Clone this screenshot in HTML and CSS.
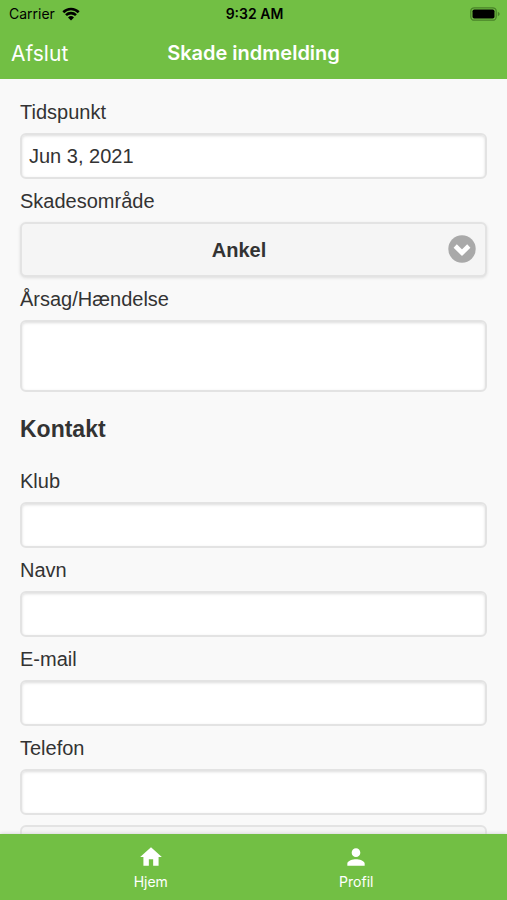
FILE: index.html
```html
<!DOCTYPE html>
<html lang="da">
<head>
<meta charset="utf-8">
<meta name="viewport" content="width=device-width, initial-scale=1">
<title>Skade indmelding</title>
<link rel="stylesheet" href="styles.css">
</head>
<body>
<header class="top">
  <div class="status">
    <div class="carrier">
      <span>Carrier</span>
      <svg class="wifi" viewBox="0 0 18 14" aria-hidden="true">
        <path d="M1.3 5.2a11 11 0 0 1 15.4 0M4 8.2a7.1 7.1 0 0 1 10 0" fill="none" stroke="#000" stroke-width="2.6"/>
        <path d="M9 13.6 6 10.5a4.3 4.3 0 0 1 6 0z"/>
      </svg>
    </div>
    <span class="clock">9:32 AM</span>
    <svg class="battery" viewBox="0 0 30 14" aria-hidden="true">
      <rect x=".8" y=".8" width="25.4" height="12.4" rx="3.5" fill="none" stroke="#498329" stroke-width="1.3"/>
      <rect x="2.5" y="2.5" width="22" height="9" rx="1.8"/>
      <path d="M27.8 4.8c2.4.8 2.4 3.6 0 4.400z" fill="#498329"/>
    </svg>
  </div>
  <div class="navbar">
    <button class="back" type="button">Afslut</button>
    <h1 class="title">Skade indmelding</h1>
  </div>
</header>
<main class="content">
  <form class="form">
    <label class="label" for="time">Tidspunkt</label>
    <input class="field" id="time" type="text" value="Jun 3, 2021">
    <label class="label" for="area">Skadesområde</label>
    <div class="picker">
      <select class="select" id="area"><option>Ankel</option></select>
      <svg class="chevron" viewBox="0 0 28 28" aria-hidden="true">
        <circle cx="14" cy="14" r="13.7" fill="#a9a9a9"/>
        <path d="m7.200 11 6.800 6.700 6.800-6.700" fill="none" stroke="#fff" stroke-width="4.600"/>
      </svg>
    </div>
    <label class="label" for="cause">Årsag/Hændelse</label>
    <textarea class="field area" id="cause"></textarea>
    <h2 class="heading">Kontakt</h2>
    <label class="label" for="club">Klub</label>
    <input class="field" id="club" type="text">
    <label class="label" for="name">Navn</label>
    <input class="field" id="name" type="text">
    <label class="label" for="email">E-mail</label>
    <input class="field" id="email" type="email">
    <label class="label" for="phone">Telefon</label>
    <input class="field" id="phone" type="tel">
    <button class="submit" type="button" aria-label="Send"></button>
  </form>
</main>
<nav class="tabs">
  <a class="tab" href="#hjem">
    <svg class="icon" viewBox="0 0 24 24" aria-hidden="true"><path d="M10 20v-6h4v6h5v-8h3L12 3 2 12h3v8z"/></svg>
    <span>Hjem</span>
  </a>
  <a class="tab" href="#profil">
    <svg class="icon" viewBox="0 0 24 24" aria-hidden="true"><path d="M12 12c2.200 0 4-1.800 4-4s-1.800-4-4-4-4 1.800-4 4 1.800 4 4 4zm0 2c-2.700 0-8 1.300-8 4v2h16v-2c0-2.700-5.300-4-8-4z"/></svg>
    <span>Profil</span>
  </a>
</nav>
</body>
</html>
```
FILE: styles.css
```css
* {
  box-sizing: border-box;
}

body {
  margin: 0;
  height: 100vh;
  display: flex;
  flex-direction: column;
  background: #f9f9f9;
  color: #333;
  font-family: "Liberation Sans", Arial, sans-serif;
}

.top {
  flex: none;
  background: #72bf44;
  font-family: Inter, sans-serif;
}

.status,
.navbar {
  display: grid;
  grid-template-columns: 1fr auto 1fr;
  align-items: center;
}

.status {
  height: 27px;
  padding: 0 7px 0 9px;
  color: #000;
  font-size: 14px;
}

.carrier {
  display: flex;
  align-items: center;
  gap: 7px;
}

.wifi {
  width: 18px;
  height: 14px;
}

.clock {
  font-weight: 600;
}

.battery {
  width: 30px;
  height: 14px;
  justify-self: end;
}

.navbar {
  height: 52px;
  padding: 0 11px;
  color: #fff;
}

.back {
  justify-self: start;
  padding: 0;
  border: 0;
  background: none;
  color: inherit;
  font: 21px Inter, sans-serif;
}

.title {
  margin: 0;
  font-size: 20px;
  font-weight: 600;
}

.content {
  flex: 1;
  min-height: 0;
  overflow-y: auto;
  scrollbar-width: none;
  padding: 21px 20px;
}

.form {
  display: flex;
  flex-direction: column;
}

.label {
  margin-bottom: 9px;
  font-size: 20px;
  line-height: 24px;
}

.field {
  flex: none;
  width: 100%;
  height: 46px;
  margin: 0 0 10px;
  padding: 0 7px;
  border: 2px solid #e3e3e3;
  border-radius: 6px;
  background: #fff;
  box-shadow: inset 0 1px 3px #ddd;
  color: #333;
  font: 20px "Liberation Sans", Arial, sans-serif;
  outline: 0;
}

.area {
  height: 72px;
  margin: 0;
  resize: none;
}

.picker {
  position: relative;
  margin-bottom: 10px;
}

.select {
  display: block;
  width: 100%;
  height: 55px;
  padding: 0 44px 0 15px;
  border: 2px solid #e3e3e3;
  border-radius: 6px;
  background: #f5f5f5;
  box-shadow: 0 1px 3px #ddd;
  appearance: none;
  color: #333;
  font: bold 20px "Liberation Sans", Arial, sans-serif;
  text-align: center;
  text-align-last: center;
}

.chevron {
  position: absolute;
  top: 13px;
  right: 11px;
  width: 28px;
  height: 28px;
  pointer-events: none;
}

.heading {
  margin: 24px 0 27px;
  font-size: 23px;
  line-height: 26px;
}

.submit {
  height: 54px;
  border: 2px solid #e3e3e3;
  border-radius: 6px;
  background: #f5f5f5;
}

.tabs {
  flex: none;
  height: 66px;
  display: flex;
  padding: 10px 48px 0;
  background: #72bf44;
  box-shadow: 0 0 4px #ccc;
  font: 14px/20px Inter, sans-serif;
}

.tab {
  flex: 1;
  display: flex;
  flex-direction: column;
  align-items: center;
  gap: 2px;
  color: #fff;
  text-decoration: none;
}

.icon {
  width: 26px;
  height: 26px;
  fill: #fff;
}
```
